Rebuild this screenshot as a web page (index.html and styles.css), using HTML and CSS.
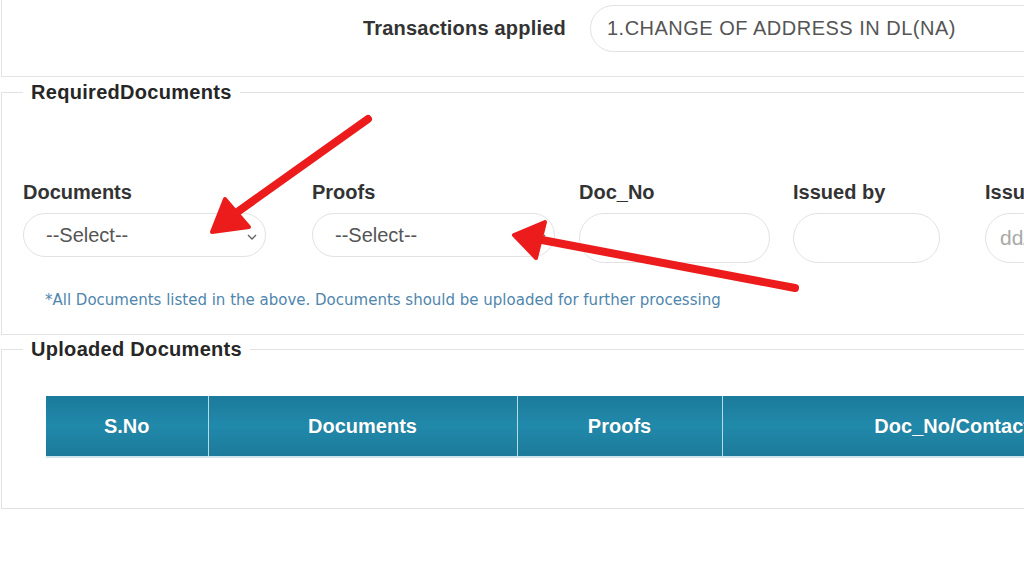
FILE: index.html
```html
<!DOCTYPE html>
<html lang="en">
<head>
<meta charset="utf-8">
<title>Required Documents</title>
<link rel="stylesheet" href="styles.css">
</head>
<body>
<div class="page">
  <div class="txn-panel">
    <span class="txn-label">Transactions applied</span>
    <div class="txn-input">1.CHANGE OF ADDRESS IN DL(NA)</div>
  </div>

  <fieldset class="box req">
    <legend>RequiredDocuments</legend>
    <div class="fields">
      <div class="field f-doc">
        <label>Documents</label>
        <div class="select">--Select--<svg class="chev" viewBox="0 0 10 6" width="10" height="6"><path d="M1 1 L5 5 L9 1" fill="none" stroke="#666" stroke-width="1.4"/></svg></div>
      </div>
      <div class="field f-proof">
        <label>Proofs</label>
        <div class="select">--Select--<svg class="chev" viewBox="0 0 10 6" width="10" height="6"><path d="M1 1 L5 5 L9 1" fill="none" stroke="#666" stroke-width="1.4"/></svg></div>
      </div>
      <div class="field f-no">
        <label>Doc_No</label>
        <div class="text-input"></div>
      </div>
      <div class="field f-by">
        <label>Issued by</label>
        <div class="text-input"></div>
      </div>
      <div class="field f-date">
        <label>Issued on</label>
        <div class="text-input placeholder">dd/mm/yyyy</div>
      </div>
    </div>
    <p class="note">*All Documents listed in the above. Documents should be uploaded for further processing</p>
  </fieldset>

  <fieldset class="box up">
    <legend>Uploaded Documents</legend>
    <table class="grid">
      <thead>
        <tr>
          <th class="c1">S.No</th>
          <th class="c2">Documents</th>
          <th class="c3">Proofs</th>
          <th class="c4">Doc_No/Contact No</th>
        </tr>
      </thead>
    </table>
  </fieldset>
</div>

<svg class="arrows" width="1024" height="576" viewBox="0 0 1024 576">
  <line x1="368" y1="119" x2="236" y2="213" stroke="#ec1c1c" stroke-width="8" stroke-linecap="round"/>
  <polygon points="212,232 225,199 249,227" fill="#ec1c1c" stroke="#ec1c1c" stroke-width="4" stroke-linejoin="round"/>
  <line x1="795" y1="288" x2="542" y2="240" stroke="#ec1c1c" stroke-width="8" stroke-linecap="round"/>
  <polygon points="514,235 545,222 536,258" fill="#ec1c1c" stroke="#ec1c1c" stroke-width="4" stroke-linejoin="round"/>
</svg>
</body>
</html>
```

FILE: styles.css
```css
html, body {
  margin: 0;
  padding: 0;
  background: #ffffff;
  overflow: hidden;
  width: 1024px;
  height: 576px;
}

body {
  font-family: "Liberation Sans", Arial, sans-serif;
  color: #333;
  position: relative;
}

.page {
  width: 1400px;
  padding-left: 1px;
}

.txn-panel {
  display: flex;
  align-items: center;
  height: 71px;
  padding: 5px 0 0 361px;
  border: 1px solid #e4e4e4;
  border-top: none;
}

.txn-label {
  font-size: 20px;
  font-weight: bold;
  color: #333;
  letter-spacing: 0.2px;
  margin-right: 24px;
  margin-top: -24px;
}

.txn-input {
  align-self: flex-start;
  width: 700px;
  box-sizing: border-box;
  height: 47px;
  border: 1px solid #e2e2e2;
  border-radius: 24px;
  padding-left: 16px;
  font-size: 20px;
  line-height: 45px;
  letter-spacing: 0.5px;
  color: #555;
}

.box {
  margin: 4px 0 0 0;
  border: 1px solid #e2e2e2;
  padding: 77px 21px 25px;
  min-width: 0;
}

.box legend {
  font-size: 20px;
  font-weight: bold;
  color: #262626;
  padding: 0 8px;
  line-height: 23px;
  letter-spacing: 0.3px;
}

.fields {
  display: grid;
  grid-template-columns: 289px 267px 214px 192px 240px;
  align-items: start;
}

.field label {
  display: block;
  font-size: 20px;
  font-weight: bold;
  color: #333;
  line-height: 23px;
  margin-bottom: 9px;
}

.select {
  box-sizing: border-box;
  height: 44px;
  border: 1px solid #e2e2e2;
  border-radius: 22px;
  padding-left: 22px;
  font-size: 20px;
  line-height: 42px;
  color: #555;
  position: relative;
}

.chev {
  position: absolute;
  right: 8px;
  top: 20px;
}

.f-doc .select,
.f-proof .select {
  width: 243px;
}

.text-input {
  box-sizing: border-box;
  height: 50px;
  border: 1px solid #e2e2e2;
  border-radius: 25px;
}

.f-no .text-input { width: 191px; }
.f-by .text-input { width: 147px; }
.f-date .text-input { width: 220px; }

.placeholder {
  font-size: 21px;
  line-height: 48px;
  padding-left: 14px;
  color: #a8a8a8;
}

.note {
  margin: 29px 0 0 22px;
  font-family: "DejaVu Sans", Verdana, sans-serif;
  font-size: 15px;
  line-height: 17px;
  color: #4f86ad;
}

.up {
  margin-top: 3px;
  padding: 35px 21px 50px;
}

.grid {
  margin-left: 23px;
  border-collapse: collapse;
  table-layout: fixed;
}

.grid th {
  height: 61px;
  padding: 0;
  box-sizing: border-box;
  background: linear-gradient(#1b7a9b, #2189aa 50%, #1c7a9a);
  color: #fff;
  font-size: 20px;
  font-weight: bold;
  text-align: center;
  border-left: 1px solid #b9dbe6;
  border-bottom: 2px solid #cfe6ee;
  text-shadow: 0 0 1px rgba(0,0,0,0.2);
}

.grid th.c1 { width: 162px; border-left: none; }
.grid th.c2 { width: 309px; }
.grid th.c3 { width: 205px; }
.grid th.c4 { width: 492px; }

.arrows {
  position: absolute;
  left: 0;
  top: 0;
  pointer-events: none;
}
```
